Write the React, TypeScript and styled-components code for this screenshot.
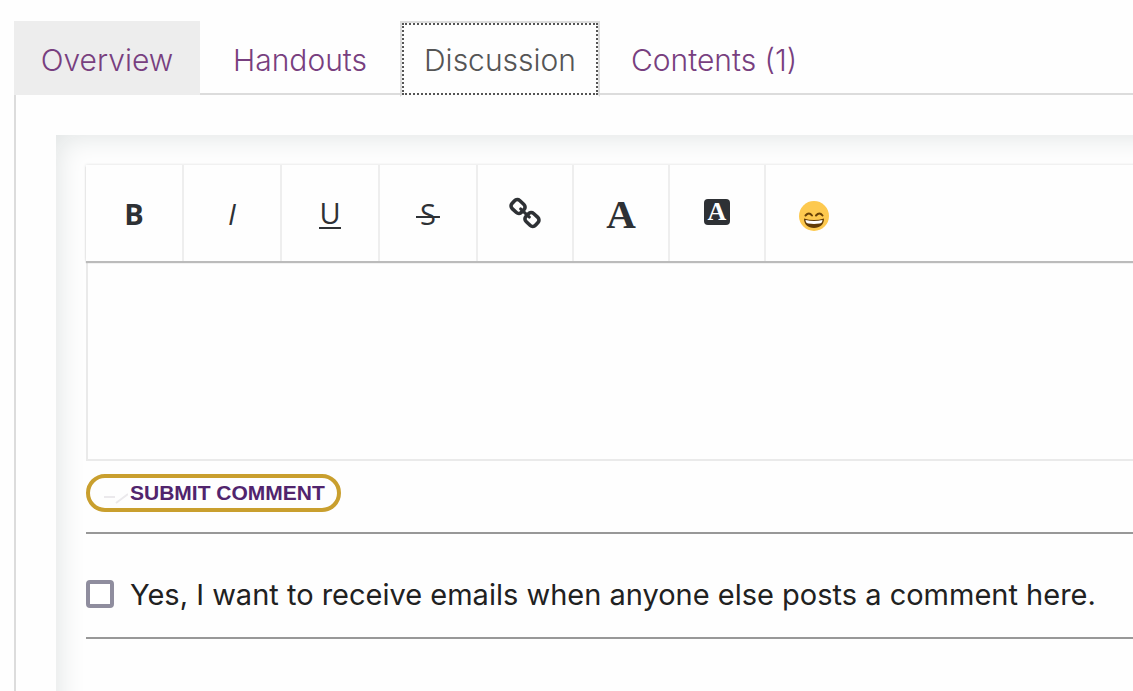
import React from 'react';
import styled, { createGlobalStyle, css } from 'styled-components';

const GlobalStyle = createGlobalStyle`
  *, *::before, *::after { box-sizing: border-box; }
  body {
    margin: 0;
    background: #fefefe;
    color: #212121;
    font-family: Inter, "Liberation Sans", sans-serif;
    font-size: 30px;
    font-weight: 350;
  }
`;

const Page = styled.main`
  min-height: 100vh;
  display: flex;
  flex-direction: column;
  padding: 21px 0 0 14px;
  overflow: hidden;
`;

const TabBar = styled.nav`
  display: grid;
  grid-template-columns: 186px 190px 200px max-content;
  gap: 5px;
  height: 74px;
  box-shadow: inset 0 -2px #dcdcdc;
`;

const Tab = styled.a<{ $tone?: 'shaded' | 'current' }>`
  display: flex;
  align-items: center;
  justify-content: center;
  padding: 4px 24px 0;
  border: 2px solid transparent;
  line-height: 36px;
  color: #783f7f;
  text-decoration: none;
  white-space: nowrap;

  ${({ $tone }) => $tone === 'shaded' && css`
    background: #ededed;
  `}

  ${({ $tone }) => $tone === 'current' && css`
    margin-bottom: -2px;
    padding-bottom: 2px;
    background: #fefefe;
    color: #555;
    border-color: #dcdcdc;
    border-bottom-color: #fefefe;
    outline: 2px dotted #555;
    outline-offset: -4px;
  `}
`;

const TabPanel = styled.section`
  flex: 1;
  display: flex;
  padding: 40px 0 0 40px;
  border-left: 2px solid #dcdcdc;
`;

const CommentBox = styled.form`
  flex: 1;
  margin: 0 -60px -60px 0;
  padding: 30px;
  box-shadow: inset 0 0 30px #dde1e1;
`;

const Toolbar = styled.div`
  position: relative;
  display: flex;
  height: 96px;
  background: #fefefe;
  box-shadow: 0 2px 1px #bbb, 0 0 3px #ddd;
`;

const Tool = styled.button<{ $wide?: boolean }>`
  display: flex;
  align-items: center;
  justify-content: center;
  width: ${({ $wide }) => ($wide ? 98 : 96)}px;
  padding: 2px 0 0;
  border: 0;
  border-right: 2px solid #eee;
  background: none;
  color: #2e3135;
  font: 500 29px/32px "Open Sans", sans-serif;

  &:last-child { border-right: 0; }
`;

const Bold = styled.b`
  font-weight: 700;
`;

const Underlined = styled.span`
  border-bottom: 2px solid;
  line-height: 28px;
`;

const Struck = styled.span`
  padding: 0 4px;
  background: linear-gradient(currentColor, currentColor) center 18px / 100% 2px no-repeat;
`;

const Letter = styled.span`
  font: 700 41px/48px "Liberation Serif", serif;
`;

const LetterTile = styled.span`
  width: 26px;
  height: 26px;
  margin-bottom: 4px;
  border-radius: 4px;
  background: #2e3135;
  color: #fff;
  font: 700 26px/26px "Liberation Serif", serif;
`;

const Editor = styled.textarea`
  display: block;
  width: 100%;
  height: 200px;
  padding: 16px;
  border: 2px solid #eaeaea;
  background: transparent;
  font: inherit;
  resize: none;
  outline: none;
`;

const SubmitButton = styled.button`
  display: flex;
  align-items: center;
  gap: 2px;
  height: 38px;
  margin: 13px 0 20px;
  padding: 0 12px 0 14px;
  border: 4px solid #c99f2e;
  border-radius: 19px;
  background: #fefefe;
  color: #51246d;
  font: 700 21px/24px "Liberation Sans", Arial, sans-serif;
  text-transform: uppercase;
`;

const Rule = styled.hr`
  height: 2px;
  margin: 0;
  border: 0;
  background: #989898;
`;

const Subscribe = styled.label`
  display: flex;
  align-items: center;
  gap: 16px;
  height: 102px;
  padding-top: 18px;
  margin-bottom: 1px;
  font-size: 29px;
  font-weight: 400;
  white-space: nowrap;
`;

const Checkbox = styled.input`
  appearance: none;
  width: 28px;
  height: 28px;
  margin: 0;
  border: 4px solid #8f8d9e;
  border-radius: 4px;
  background: #fff;
`;

const CenteredIcon = styled.svg`
  overflow: visible;
`;

const LinkIcon = () => (
  <CenteredIcon width="30" height="30" viewBox="0 0 30 30" fill="none" stroke="#2e3135" strokeWidth="3.6" aria-hidden="true">
    <g transform="rotate(43 15 14)">
      <rect x="-1" y="8.500" width="13" height="11" rx="3.6" />
      <rect x="18" y="8.500" width="13" height="11" rx="3.6" />
      <path d="M9 14h12" strokeWidth="3" strokeLinecap="round" />
    </g>
  </CenteredIcon>
);

const GrinIcon = () => (
  <svg width="30" height="34" viewBox="0 -4 30 34" aria-hidden="true">
    <circle cx="15" cy="15" r="15" fill="#fdc94f" />
    <path d="M6.500 14.500q3.500-4 6.500 0M17 14.500q3.500-4 6.500 0" fill="none" stroke="#684208" strokeWidth="2" strokeLinecap="round" />
    <path d="M5 17.500q10 3 20 0c0 6-4 9.500-10 9.500s-10-3.500-10-9.500z" fill="#613b06" />
    <path d="M6.500 19q8.500 2 17 0c0 2.500-1.500 3.500-3 3.500q-5.500.8-11 0c-1.500 0-3-1-3-3.500z" fill="#fff" />
  </svg>
);

const PencilTrace = () => (
  <svg width="24" height="24" viewBox="0 0 24 24" fill="none" stroke="#ebe9ec" strokeWidth="2" aria-hidden="true">
    <path d="M0 16h11M12 22l12-9" />
  </svg>
);

export default function App() {
  return (
    <>
      <GlobalStyle />
      <Page>
        <TabBar aria-label="Session sections">
          <Tab href="#overview" $tone="shaded">Overview</Tab>
          <Tab href="#handouts">Handouts</Tab>
          <Tab href="#discussion" $tone="current" aria-current="page">Discussion</Tab>
          <Tab href="#contents">Contents (1)</Tab>
        </TabBar>
        <TabPanel id="discussion">
          <CommentBox>
            <Toolbar role="toolbar" aria-label="Formatting">
              <Tool type="button" $wide aria-label="Bold"><Bold>B</Bold></Tool>
              <Tool type="button" $wide aria-label="Italic"><em>I</em></Tool>
              <Tool type="button" $wide aria-label="Underline"><Underlined>U</Underlined></Tool>
              <Tool type="button" $wide aria-label="Strikethrough"><Struck>S</Struck></Tool>
              <Tool type="button" aria-label="Link"><LinkIcon /></Tool>
              <Tool type="button" aria-label="Text color"><Letter>A</Letter></Tool>
              <Tool type="button" aria-label="Background color"><LetterTile>A</LetterTile></Tool>
              <Tool type="button" aria-label="Emoji"><GrinIcon /></Tool>
            </Toolbar>
            <Editor aria-label="Comment" />
            <SubmitButton type="button"><PencilTrace />Submit Comment</SubmitButton>
            <Rule />
            <Subscribe>
              <Checkbox type="checkbox" />
              Yes, I want to receive emails when anyone else posts a comment here.
            </Subscribe>
            <Rule />
          </CommentBox>
        </TabPanel>
      </Page>
    </>
  );
}
